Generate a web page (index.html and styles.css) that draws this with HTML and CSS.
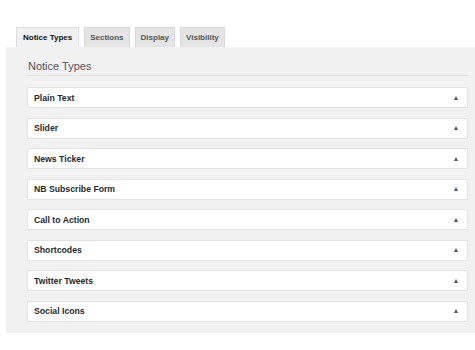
FILE: index.html
```html
<!DOCTYPE html>
<html lang="en">
<head>
  <meta charset="UTF-8" />
  <title>Notice Types</title>
  <link rel="stylesheet" href="styles.css">
</head>
<body>
  <div class="tabs">
    <span class="tab active">Notice Types</span>
    <span class="tab">Sections</span>
    <span class="tab">Display</span>
    <span class="tab">Visibility</span>
  </div>

  <div class="panel">
    <h2 class="panel-title">Notice Types</h2>
    <div class="rows">
      <div class="row"><span class="label">Plain Text</span><span class="arrow"></span></div>
      <div class="row"><span class="label">Slider</span><span class="arrow"></span></div>
      <div class="row"><span class="label">News Ticker</span><span class="arrow"></span></div>
      <div class="row"><span class="label">NB Subscribe Form</span><span class="arrow"></span></div>
      <div class="row"><span class="label">Call to Action</span><span class="arrow"></span></div>
      <div class="row"><span class="label">Shortcodes</span><span class="arrow"></span></div>
      <div class="row"><span class="label">Twitter Tweets</span><span class="arrow"></span></div>
      <div class="row"><span class="label">Social Icons</span><span class="arrow"></span></div>
    </div>
  </div>
</body>
</html>
```

FILE: styles.css
```css
body {
  margin: 0;
  padding-top: 27px;
  background: #fff;
  font-family: 'Liberation Sans', Arial, sans-serif;
  color: #23282d;
}
.tabs {
  display: flex;
  margin-left: 16px;
  height: 20px;
}
.tab {
  display: flex;
  align-items: center;
  box-sizing: border-box;
  height: 20px;
  padding: 0 5px;
  margin-right: 5px;
  background: #e4e4e4;
  border: 1px solid #d6d6d6;
  border-bottom: none;
  font-size: 8px;
  font-weight: bold;
  color: #555;
}
.tab.active {
  background: #f1f1f1;
  color: #111;
  border-color: #dcdcdc;
  padding: 0 6px;
}
.panel {
  margin-left: 6px;
  background: #f1f1f1;
  padding: 12px 7px 11px 21px;
}
.panel-title {
  margin: 0;
  font-size: 11px;
  font-weight: normal;
  color: #555;
  line-height: 14px;
  padding: 0 0 2px 1px;
  border-bottom: 1px solid #e0e0e0;
}
.rows {
  display: flex;
  flex-direction: column;
  gap: 9.57px;
  margin-top: 11px;
}
.row {
  display: flex;
  align-items: center;
  justify-content: space-between;
  box-sizing: border-box;
  height: 21px;
  padding: 0 9px 0 6px;
  background: #fff;
  border: 1px solid #e3e3e3;
  border-radius: 1px;
}
.label {
  font-size: 8.7px;
  font-weight: bold;
  color: #23282d;
}
.arrow {
  width: 0;
  height: 0;
  border-left: 2.5px solid transparent;
  border-right: 2.5px solid transparent;
  border-bottom: 4px solid #4a5460;
}
```
